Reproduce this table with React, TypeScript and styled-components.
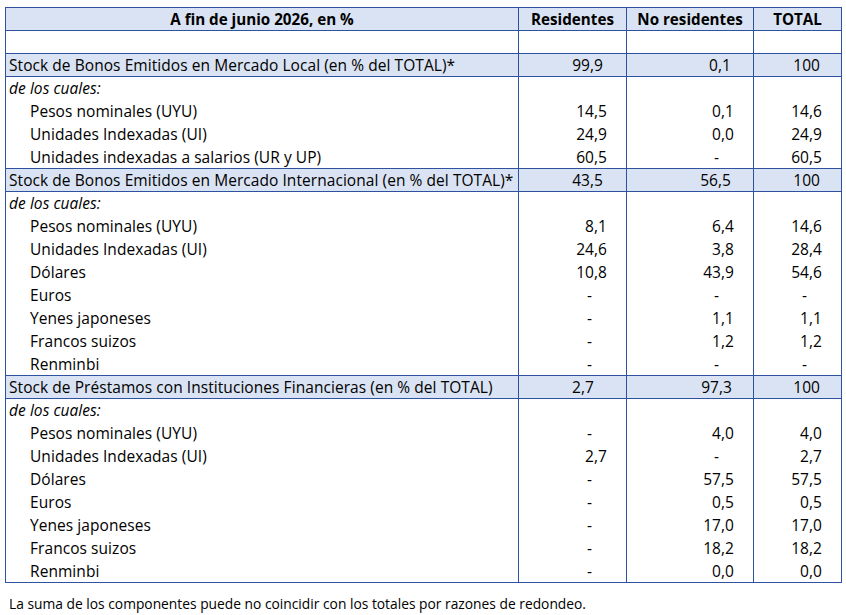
import React from "react";
import styled, {createGlobalStyle} from "styled-components";

const GlobalStyle = createGlobalStyle`
  body {
    margin: 0;
    background: #ffffff;
    font-family: "Open Sans", Lato, sans-serif;
    color: #000000;
  }
`

const LINE = "#2f52a0";
const FILL = "#dae3f3";

const Page = styled.div`
  padding: 7px 0 0 5px;
`

const Sheet = styled.div`
  width: 837px;
  box-sizing: border-box;
  border: 1px solid ${LINE};
  border-bottom: none;
  font-size: 15.5px;
  letter-spacing: 0.06px;
`

const Row = styled.div<{ $fill?: boolean; $ruled?: boolean }>`
  display: grid;
  grid-template-columns: 512px 108px 127px 88px;
  height: 23px;
  box-sizing: border-box;
  background: ${p => (p.$fill ? FILL : "transparent")};
  border-bottom: ${p => (p.$ruled ? `1px solid ${LINE}` : "none")};
`

const Cell = styled.div`
  line-height: 21px;
  padding-top: 1px;
  white-space: nowrap;
  & + & {
    border-left: 1px solid ${LINE};
  }
`

const HeadCell = styled(Cell)`
  font-size: 15.2px;
  font-weight: bold;
  letter-spacing: 0;
  text-align: center;
`

const LabelCell = styled(Cell)<{ $indent?: boolean; $italic?: boolean }>`
  padding-left: ${p => (p.$indent ? 24 : 3)}px;
  font-style: ${p => (p.$italic ? "italic" : "normal")};
`

const NumCell = styled(Cell)<{ $pad: number }>`
  padding-right: ${p => p.$pad}px;
  text-align: right;
`

const Note = styled.p`
  margin: 12px 0 0 4px;
  font-size: 13.8px;
  line-height: 18px;
`

type Item = [string, string, string, string];

interface Section {
  title: string;
  values: [string, number][];
  items: Item[];
}

const sections: Section[] = [
  {
    title: "Stock de Bonos Emitidos en Mercado Local (en % del TOTAL)*",
    values: [["99,9", 23], ["0,1", 22], ["100", 21]],
    items: [
      ["Pesos nominales (UYU)", "14,5", "0,1", "14,6"],
      ["Unidades Indexadas (UI)", "24,9", "0,0", "24,9"],
      ["Unidades indexadas a salarios (UR y UP)", "60,5", "-", "60,5"],
    ],
  },
  {
    title: "Stock de Bonos Emitidos en Mercado Internacional (en % del TOTAL)*",
    values: [["43,5", 23], ["56,5", 22], ["100", 21]],
    items: [
      ["Pesos nominales (UYU)", "8,1", "6,4", "14,6"],
      ["Unidades Indexadas (UI)", "24,6", "3,8", "28,4"],
      ["Dólares", "10,8", "43,9", "54,6"],
      ["Euros", "-", "-", "-"],
      ["Yenes japoneses", "-", "1,1", "1,1"],
      ["Francos suizos", "-", "1,2", "1,2"],
      ["Renminbi", "-", "-", "-"],
    ],
  },
  {
    title: "Stock de Préstamos con Instituciones Financieras (en % del TOTAL)",
    values: [["2,7", 32], ["97,3", 21], ["100", 21]],
    items: [
      ["Pesos nominales (UYU)", "-", "4,0", "4,0"],
      ["Unidades Indexadas (UI)", "2,7", "-", "2,7"],
      ["Dólares", "-", "57,5", "57,5"],
      ["Euros", "-", "0,5", "0,5"],
      ["Yenes japoneses", "-", "17,0", "17,0"],
      ["Francos suizos", "-", "18,2", "18,2"],
      ["Renminbi", "-", "0,0", "0,0"],
    ],
  },
];

const SectionRows = ({section}: { section: Section }) => (
  <>
    <Row $fill $ruled>
      <LabelCell>{section.title}</LabelCell>
      {section.values.map(([v, pad], i) => (
        <NumCell key={i} $pad={pad}>{v}</NumCell>
      ))}
    </Row>
    <Row>
      <LabelCell $italic>de los cuales:</LabelCell>
      <NumCell $pad={19}/>
      <NumCell $pad={19}/>
      <NumCell $pad={19}/>
    </Row>
    {section.items.map((item, idx) => (
      <Row key={item[0]} $ruled={idx === section.items.length - 1}>
        <LabelCell $indent>{item[0]}</LabelCell>
        {item.slice(1).map((v, i) => (
          <NumCell key={i} $pad={v === "-" ? 34 : 19}>{v}</NumCell>
        ))}
      </Row>
    ))}
  </>
);

const App = () => {
  return (
    <>
      <GlobalStyle/>
      <Page>
        <Sheet>
          <Row $fill $ruled>
            <HeadCell>A fin de junio 2026, en %</HeadCell>
            <HeadCell>Residentes</HeadCell>
            <HeadCell>No residentes</HeadCell>
            <HeadCell>TOTAL</HeadCell>
          </Row>
          <Row $ruled>
            <Cell/>
            <Cell/>
            <Cell/>
            <Cell/>
          </Row>
          {sections.map(s => (
            <SectionRows key={s.title} section={s}/>
          ))}
        </Sheet>
        <Note>La suma de los componentes puede no coincidir con los totales por razones de redondeo.</Note>
      </Page>
    </>
  );
};

export default App;
